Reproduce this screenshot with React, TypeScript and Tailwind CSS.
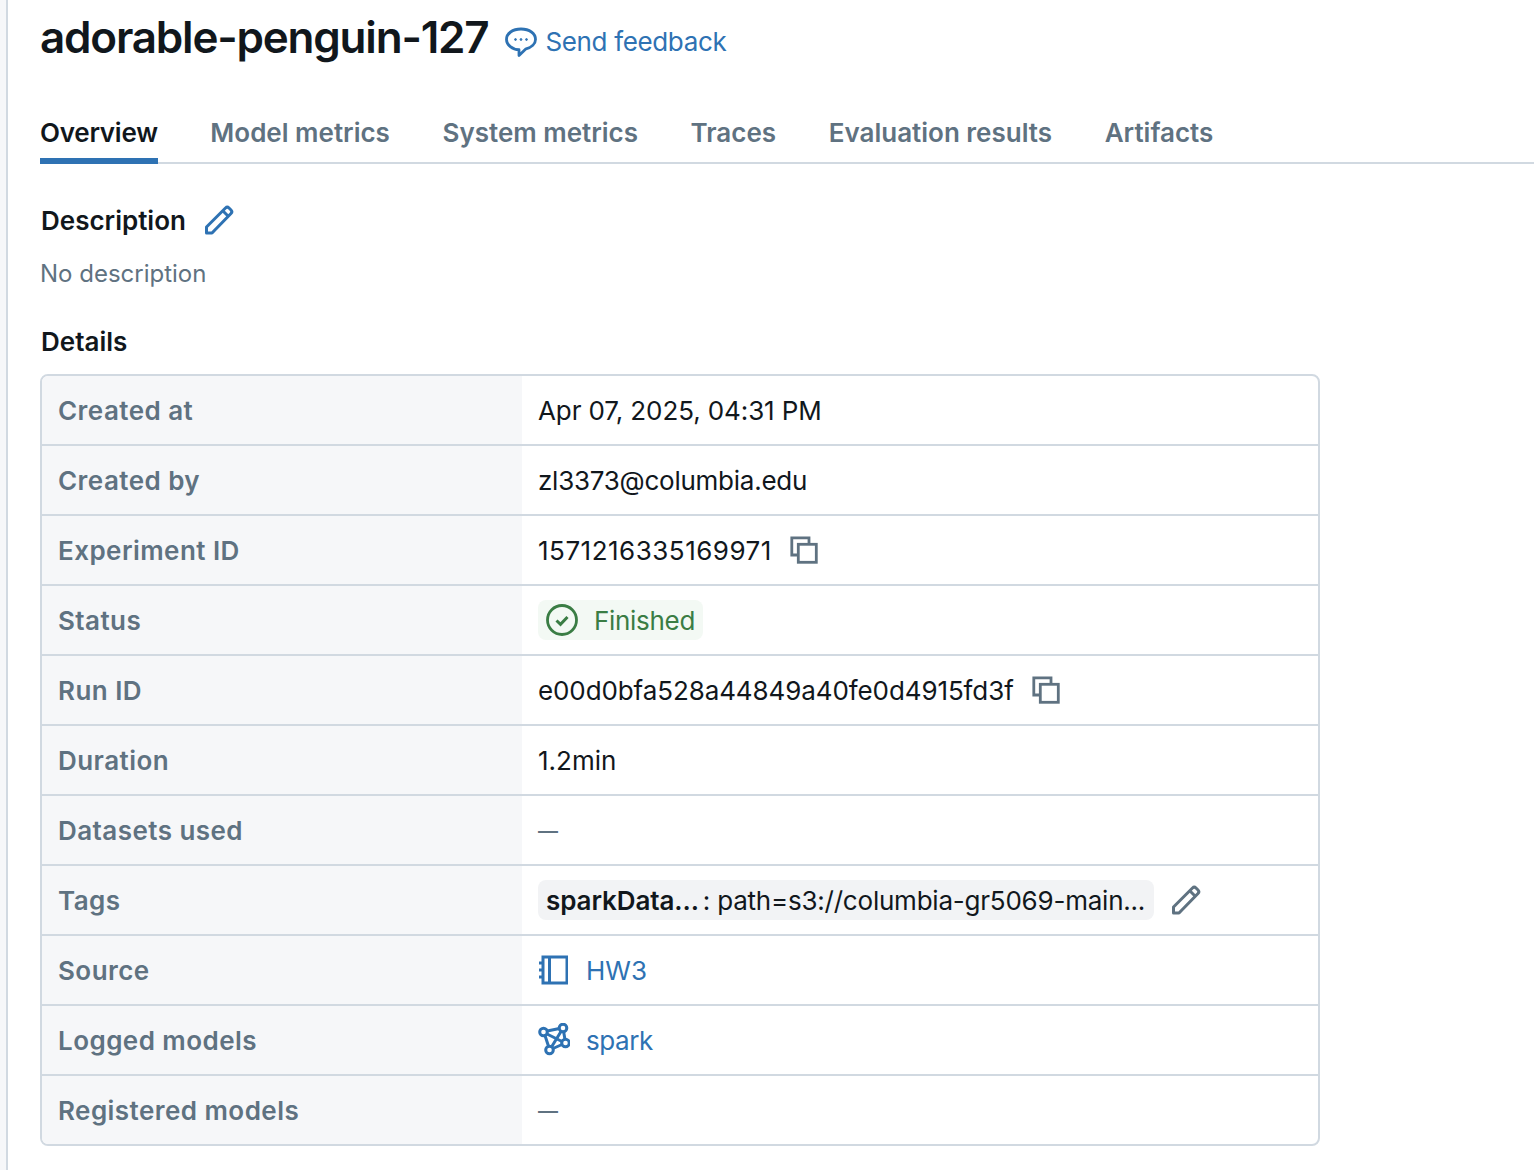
import type { ReactNode } from "react";

// Small drawn icons, stroke uses currentColor so the row decides the colour.
function FeedbackIcon() {
  return (
    <svg width="34" height="34" viewBox="0 0 34 34" fill="none" stroke="currentColor" strokeWidth="2.8" strokeLinejoin="round" className="shrink-0">
      <path d="M17 5C8.500 5 2.500 9.500 2.500 15.500 2.500 21 8.500 25.500 15 25.700V31.500l7-6.700C27.500 23.500 31.500 20 31.500 15.500 31.500 9.500 25.500 5 17 5Z" />
      <circle cx="11.500" cy="15.500" r="0.9" fill="currentColor" strokeWidth="1" />
      <circle cx="17" cy="15.500" r="0.9" fill="currentColor" strokeWidth="1" />
      <circle cx="22.500" cy="15.500" r="0.9" fill="currentColor" strokeWidth="1" />
    </svg>
  );
}

function PencilIcon() {
  return (
    <svg width="32" height="32" viewBox="0 0 32 32" fill="none" stroke="currentColor" strokeWidth="3" strokeLinejoin="round">
      <path d="M3.500 29v-6L22.500 4a2.500 2.500 0 0 1 3.500 0l2 2a2.500 2.500 0 0 1 0 3.500L9 29Z" />
      <path d="M20 7l5 5" />
    </svg>
  );
}

function CopyIcon() {
  return (
    <svg width="30" height="30" viewBox="0 0 30 30" fill="none" stroke="#5f7281" strokeWidth="2.800">
      <path d="M20 8.500V2.800H2.800V20H9" />
      <rect x="9.300" y="9.300" width="18" height="18" />
    </svg>
  );
}

function FinishedIcon() {
  return (
    <svg width="32" height="32" viewBox="0 0 32 32" fill="none" stroke="currentColor" strokeWidth="2.800" className="shrink-0">
      <circle cx="16" cy="16" r="14.500" />
      <path d="M10.500 16.500l4 3.800 7-7.300" strokeWidth="3" />
    </svg>
  );
}

function NotebookIcon() {
  return (
    <svg width="30" height="30" viewBox="0 0 30 30" fill="none" stroke="currentColor" strokeWidth="3" className="shrink-0">
      <rect x="5" y="2" width="24" height="26" />
      <path d="M11.500 2v26M1 8h4M1 15h4M1 22h4" />
    </svg>
  );
}

function ModelIcon() {
  return (
    <svg width="32" height="34" viewBox="0 0 32 34" fill="none" stroke="currentColor" strokeWidth="3" className="shrink-0">
      <circle cx="5.500" cy="9" r="3.800" />
      <circle cx="25" cy="5" r="3.800" />
      <circle cx="27.500" cy="20" r="3.800" />
      <circle cx="11.500" cy="27" r="3.800" />
      <path d="M9.200 8l12.200-2.500M9 11l15 7.500M7 12.500l3.500 10.700M23 8.500l-9.500 15.500M15 25.500l9-4M25.700 9l1.200 7" />
    </svg>
  );
}

function Row({ label, children }: { label: string; children: ReactNode }) {
  return (
    <div className="flex h-[70px] border-b-2 border-[#d1d9e1] last:h-[68px] last:border-b-0">
      <div className="flex w-[480px] shrink-0 items-center bg-[#f6f7f9] pl-4 text-[26px] font-semibold tracking-[0.45px] text-[#5f7281]">
        {label}
      </div>
      <div className="flex min-w-0 flex-1 items-center pl-4 text-[26px] text-[#11171c]">
        {children}
      </div>
    </div>
  );
}

function EmptyValue() {
  return <span className="pt-[2px] text-[20px] font-semibold text-[#5f7281]">—</span>;
}

const TABS = ["Overview", "Model metrics", "System metrics", "Traces", "Evaluation results", "Artifacts"];

export default function App() {
  return (
    <div className="flex h-[1170px] overflow-hidden bg-white font-['Inter',sans-serif] text-[#11171c]">
      <div className="h-full w-2 shrink-0 border-r-2 border-[#d1d9e1] bg-[#f6f7f9]" />
      <main className="min-w-0 flex-1 pl-8">
        <div className="flex h-[84px] items-center gap-4 pb-[10px]">
          <h1 className="text-[44px] font-semibold leading-none tracking-[-1.2px]">adorable-penguin-127</h1>
          <a className="flex items-center gap-[7px] pt-2 text-[26px] tracking-[-0.35px] text-[#2e72b3]">
            <FeedbackIcon />
            Send feedback
          </a>
        </div>

        <div className="flex h-[80px] items-end gap-[52.6px] border-b-2 border-[#d1d9e1]">
          {TABS.map((tab, i) => (
            <div
              key={tab}
              className={
                i === 0
                  ? "-mb-[2px] flex h-[54px] items-start border-b-[6px] border-[#2e72b3] pt-[3px] text-[26px] font-semibold tracking-[-0.25px] text-[#11171c]"
                  : "-mb-[2px] flex h-[54px] items-start pt-[3px] text-[26px] font-semibold text-[#5f7281]"
              }
            >
              {tab}
            </div>
          ))}
        </div>

        <div className="mt-[39px] flex h-[34px] items-center gap-[17px]">
          <h2 className="ml-px text-[26px] font-semibold">Description</h2>
          <span className="text-[#2e72b3]">
            <PencilIcon />
          </span>
        </div>
        <div className="mt-[21px] text-[24px] leading-[32px] text-[#5f7281]">No description</div>

        <h2 className="ml-px mt-[35px] text-[26px] font-semibold leading-[34px]">Details</h2>

        <div className="mt-[15px] w-[1280px] overflow-hidden rounded-[8px] border-2 border-[#d1d9e1]">
          <Row label="Created at">
            <span className="tracking-[-0.1px]">Apr 07, 2025, 04:31 PM</span>
          </Row>
          <Row label="Created by">
            <span className="tracking-[-0.25px]">zl3373@columbia.edu</span>
          </Row>
          <Row label="Experiment ID">
            <span className="tracking-[0.5px]">1571216335169971</span>
            <span className="ml-[17px] flex">
              <CopyIcon />
            </span>
          </Row>
          <Row label="Status">
            <span className="flex h-10 items-center gap-4 rounded-[8px] bg-[#f3f9f4] px-2 tracking-[-0.3px] text-[#3a7d44]">
              <FinishedIcon />
              Finished
            </span>
          </Row>
          <Row label="Run ID">
            <span className="tracking-[-0.1px]">e00d0bfa528a44849a40fe0d4915fd3f</span>
            <span className="ml-[17px] flex">
              <CopyIcon />
            </span>
          </Row>
          <Row label="Duration">1.2min</Row>
          <Row label="Datasets used">
            <EmptyValue />
          </Row>
          <Row label="Tags">
            <span className="flex h-10 w-[616px] items-center whitespace-nowrap rounded-[8px] bg-[#f2f3f5] px-2">
              <b className="font-semibold tracking-[-0.1px]">sparkData...</b>
              <span className="ml-1 tracking-[-0.22px]">: path=s3://columbia-gr5069-main...</span>
            </span>
            <span className="ml-4 flex text-[#5f7281]">
              <PencilIcon />
            </span>
          </Row>
          <Row label="Source">
            <span className="flex items-center gap-[18px] text-[#2e72b3]">
              <NotebookIcon />
              HW3
            </span>
          </Row>
          <Row label="Logged models">
            <span className="flex items-center gap-4 tracking-[-0.4px] text-[#2e72b3]">
              <ModelIcon />
              spark
            </span>
          </Row>
          <Row label="Registered models">
            <EmptyValue />
          </Row>
        </div>
      </main>
    </div>
  );
}
